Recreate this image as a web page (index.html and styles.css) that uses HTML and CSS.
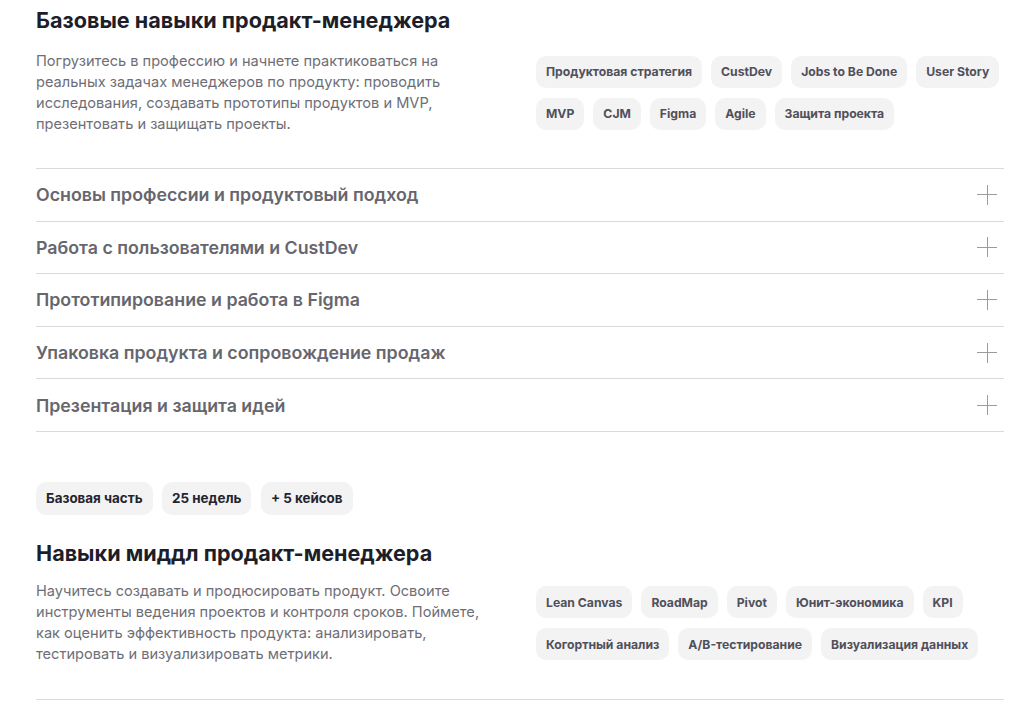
FILE: index.html
```html
<!DOCTYPE html>
<html lang="ru">
<head>
<meta charset="utf-8">
<title>Программа</title>
<link rel="stylesheet" href="styles.css">
</head>
<body>
<main class="page">
  <section class="block">
    <h2 class="block-title">Базовые навыки продакт-менеджера</h2>
    <div class="intro">
      <p class="intro-text">Погрузитесь в профессию и начнете практиковаться на реальных задачах менеджеров по продукту: проводить исследования, создавать прототипы продуктов и MVP, презентовать и защищать проекты.</p>
      <ul class="tags">
        <li class="tag">Продуктовая стратегия</li>
        <li class="tag">CustDev</li>
        <li class="tag">Jobs to Be Done</li>
        <li class="tag">User Story</li>
        <li class="tag">MVP</li>
        <li class="tag">CJM</li>
        <li class="tag">Figma</li>
        <li class="tag">Agile</li>
        <li class="tag">Защита проекта</li>
      </ul>
    </div>
    <ul class="accordion">
      <li class="acc-row"><span class="acc-title">Основы профессии и продуктовый подход</span><span class="plus"></span></li>
      <li class="acc-row"><span class="acc-title">Работа с пользователями и CustDev</span><span class="plus"></span></li>
      <li class="acc-row"><span class="acc-title">Прототипирование и работа в Figma</span><span class="plus"></span></li>
      <li class="acc-row"><span class="acc-title">Упаковка продукта и сопровождение продаж</span><span class="plus"></span></li>
      <li class="acc-row"><span class="acc-title">Презентация и защита идей</span><span class="plus"></span></li>
    </ul>
  </section>

  <section class="block block-second">
    <ul class="badges">
      <li class="badge">Базовая часть</li>
      <li class="badge">25 недель</li>
      <li class="badge">+ 5 кейсов</li>
    </ul>
    <h2 class="block-title">Навыки миддл продакт-менеджера</h2>
    <div class="intro intro-second">
      <p class="intro-text">Научитесь создавать и продюсировать продукт. Освоите инструменты ведения проектов и контроля сроков. Поймете, как оценить эффективность продукта: анализировать, тестировать и визуализировать метрики.</p>
      <ul class="tags">
        <li class="tag">Lean Canvas</li>
        <li class="tag">RoadMap</li>
        <li class="tag">Pivot</li>
        <li class="tag">Юнит-экономика</li>
        <li class="tag">KPI</li>
        <li class="tag">Когортный анализ</li>
        <li class="tag">A/B-тестирование</li>
        <li class="tag">Визуализация данных</li>
      </ul>
    </div>
    <div class="divider"></div>
  </section>
</main>
</body>
</html>
```

FILE: styles.css
```css
* { box-sizing: border-box; }
html, body { margin: 0; padding: 0; background: #ffffff; }
body {
  font-family: Inter, "Liberation Sans", Arial, sans-serif;
  color: #1e1e2a;
  overflow: hidden;
}
ul { list-style: none; margin: 0; padding: 0; }
p { margin: 0; }
.page { padding: 6px 20px 0 36px; }

.block-title {
  margin: 0;
  font-size: 21.6px;
  line-height: 28px;
  font-weight: 700;
  color: #1e1e2a;
}

.intro {
  display: grid;
  grid-template-columns: 468px 1fr;
  column-gap: 32px;
  margin-top: 16.5px;
  padding-bottom: 33.5px;
}
.intro-second {
  margin-top: 14.5px;
  padding-bottom: 34px;
}
.intro-text {
  font-size: 14.6px;
  line-height: 21px;
  color: #6e6e76;
}
.tags {
  display: flex;
  flex-wrap: wrap;
  gap: 10px 9px;
  margin-top: 5px;
  align-content: flex-start;
}
.tag {
  background: #f3f3f4;
  border-radius: 10px;
  height: 32px;
  padding: 0 10px;
  display: flex;
  align-items: center;
  font-size: 12.2px;
  font-weight: 700;
  color: #50505a;
}

.accordion { border-top: 1px solid #dadadd; }
.acc-row {
  height: 52.6px;
  border-bottom: 1px solid #dadadd;
  display: flex;
  align-items: center;
  justify-content: space-between;
}
.acc-title {
  font-size: 17.8px;
  font-weight: 600;
  color: #66666e;
}
.plus {
  position: relative;
  width: 20px;
  height: 20px;
  margin-right: 7px;
}
.plus::before, .plus::after {
  content: "";
  position: absolute;
  background: #9a9aa0;
}
.plus::before { left: 0; right: 0; top: 9.5px; height: 1px; }
.plus::after { top: 0; bottom: 0; left: 9.5px; width: 1px; }

.block-second { padding-top: 50px; }
.badges { display: flex; gap: 9.5px; margin-bottom: 24px; }
.badge {
  background: #f3f3f4;
  border-radius: 10px;
  height: 33px;
  padding: 0 10px;
  display: flex;
  align-items: center;
  font-size: 13.4px;
  font-weight: 700;
  color: #24242e;
}
.divider { border-top: 1px solid #dadadd; }
```
